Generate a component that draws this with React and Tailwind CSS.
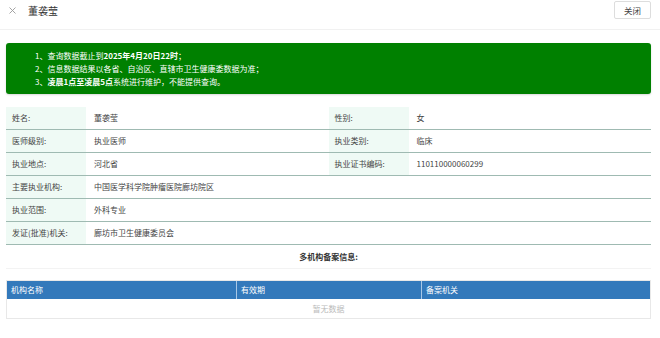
const ROWS = [
  [['姓名:', '董袭莹'], ['性别:', '女']],
  [['医师级别:', '执业医师'], ['执业类别:', '临床']],
  [['执业地点:', '河北省'], ['执业证书编码:', '110110000060299']],
  [['主要执业机构:', '中国医学科学院肿瘤医院廊坊院区']],
  [['执业范围:', '外科专业']],
  [['发证(批准)机关:', '廊坊市卫生健康委员会']],
]

function Cell({ label, value, full }) {
  return (
    <div className={full ? 'flex flex-1' : 'flex w-1/2'}>
      <div className="w-[80px] shrink-0 bg-[#effaf5] pl-[6px] flex items-center">{label}</div>
      <div className="pl-[8px] flex items-center">{value}</div>
    </div>
  )
}

export default function App() {
  return (
    <div
      className="w-[660px] h-[338px] bg-white text-[#444] text-[8px] overflow-hidden"
      style={{ fontFamily: '"Noto Sans CJK SC", "Noto Sans", sans-serif' }}
    >
      <div className="h-[30px] border-b border-[#f1f1f1] flex items-start justify-between pr-[9px]">
        <div className="flex items-center h-[20px]">
          <svg width="7" height="7" viewBox="0 0 7 7" className="ml-[9px]">
            <path d="M0.5 0.5L6.5 6.5M6.5 0.5L0.5 6.5" stroke="#9a9a9a" strokeWidth="0.9" />
          </svg>
          <span className="ml-[12px] text-[10px] text-[#333]">董袭莹</span>
        </div>
        <button className="mt-[1px] h-[18px] w-[37px] border border-[#ddd] rounded-[2px] text-[8.5px] text-[#444] bg-white">
          关闭
        </button>
      </div>

      <div className="ml-[6px] w-[645px] mt-[13px] h-[51px] bg-[#008000] rounded-[3px] text-white pl-[29px] py-[6px] leading-[13px] shadow-[0_1px_2px_rgba(0,0,0,0.15)]">
        <div>1、查询数据截止到<b>2025年4月20日22时</b>；</div>
        <div>2、信息数据结果以各省、自治区、直辖市卫生健康委数据为准；</div>
        <div>3、<b>凌晨1点至凌晨5点</b>系统进行维护，不能提供查询。</div>
      </div>

      <div className="ml-[6px] w-[645px] mt-[13px]">
        {ROWS.map((row, i) => (
          <div key={i} className="flex h-[23px] border-b border-[#9fbab2]">
            {row.map(([l, v]) => (
              <Cell key={l} label={l} value={v} full={row.length === 1} />
            ))}
          </div>
        ))}
      </div>

      <div className="ml-[6px] w-[645px] h-[24px] border-b border-[#f3f3f3] flex items-center justify-center font-bold text-[#333]">
        多机构备案信息:
      </div>

      <div className="ml-[6px] w-[645px] mt-[11px] border border-[#e8e8e8]">
        <div className="flex h-[18px] bg-[#3379bb] text-white">
          <div className="w-[230px] pl-[4px] flex items-center border-r border-[#a9c8e6]">机构名称</div>
          <div className="w-[185px] pl-[4px] flex items-center border-r border-[#a9c8e6]">有效期</div>
          <div className="flex-1 pl-[4px] flex items-center">备案机关</div>
        </div>
        <div className="h-[19px] flex items-center justify-center text-[#bbb]">暂无数据</div>
      </div>
    </div>
  )
}
